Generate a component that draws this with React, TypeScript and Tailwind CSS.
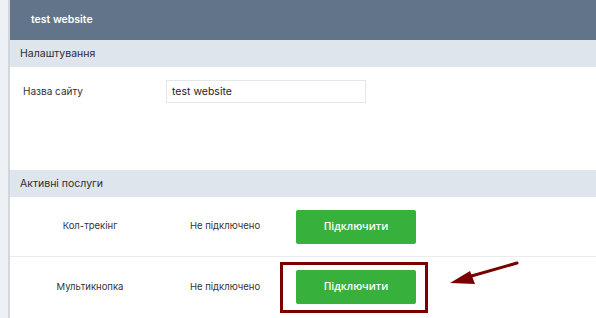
import React from 'react';

const services = [
  { name: 'Кол-трекінг', status: 'Не підключено', marked: false },
  { name: 'Мультикнопка', status: 'Не підключено', marked: true },
];

const SectionBar = ({ title }: { title: string }) => (
  <div className="h-[27px] bg-[#dfe5ed] flex items-center pl-[10px] text-[10.5px] text-[#2d2d2d]">
    {title}
  </div>
);

export default function App() {
  return (
    <div className="flex w-[596px] h-[318px] overflow-hidden bg-white font-['Inter',sans-serif]">
      <div className="w-[8px] bg-[#edf0f4]" />
      <div className="w-[2px] bg-[#d3d7dd]" />

      <div className="relative flex-1 flex flex-col">
        {/* Header */}
        <div className="h-[40px] bg-[#627489] flex items-center pl-[21px] text-[10.5px] font-semibold text-white">
          test website
        </div>

        <SectionBar title="Налаштування" />

        <div className="h-[103px] pt-[13px]">
          <div className="flex items-center h-[23px]">
            <div className="w-[156px] pl-[13px] text-[10px] text-[#333]">Назва сайту</div>
            <div className="w-[200px] h-[23px] border border-[#e6e6e6] flex items-center pl-[5px] text-[10.5px] text-[#222]">
              test website
            </div>
          </div>
        </div>

        <SectionBar title="Активні послуги" />

        {services.map((s, i) => (
          <div
            key={s.name}
            className={`flex items-center h-[60px] text-[9.5px] text-[#333] ${i === 0 ? 'border-b border-[#ebebeb]' : ''}`}
          >
            <div className="w-[160px] text-center">{s.name}</div>
            <div className="w-[110px] text-center">{s.status}</div>
            <div
              className={`w-[148px] h-[51px] border-[3px] flex items-center pl-[13px] ${
                s.marked ? 'border-[#7a0000]' : 'border-transparent'
              }`}
            >
              <button className="w-[120px] h-[34px] rounded-[2px] bg-[#37b03c] text-white text-[10.5px] font-semibold font-['Open_Sans',sans-serif]">
                Підключити
              </button>
            </div>
          </div>
        ))}

        {/* annotation arrow */}
        <svg className="absolute left-[428px] top-[260px]" width="84" height="30" viewBox="0 0 84 30">
          <line x1="79" y1="3" x2="30" y2="17" stroke="#7a0000" strokeWidth="3" strokeLinecap="round" />
          <polygon points="12,23 32,11 37,24" fill="#7a0000" />
        </svg>
      </div>
    </div>
  );
}
